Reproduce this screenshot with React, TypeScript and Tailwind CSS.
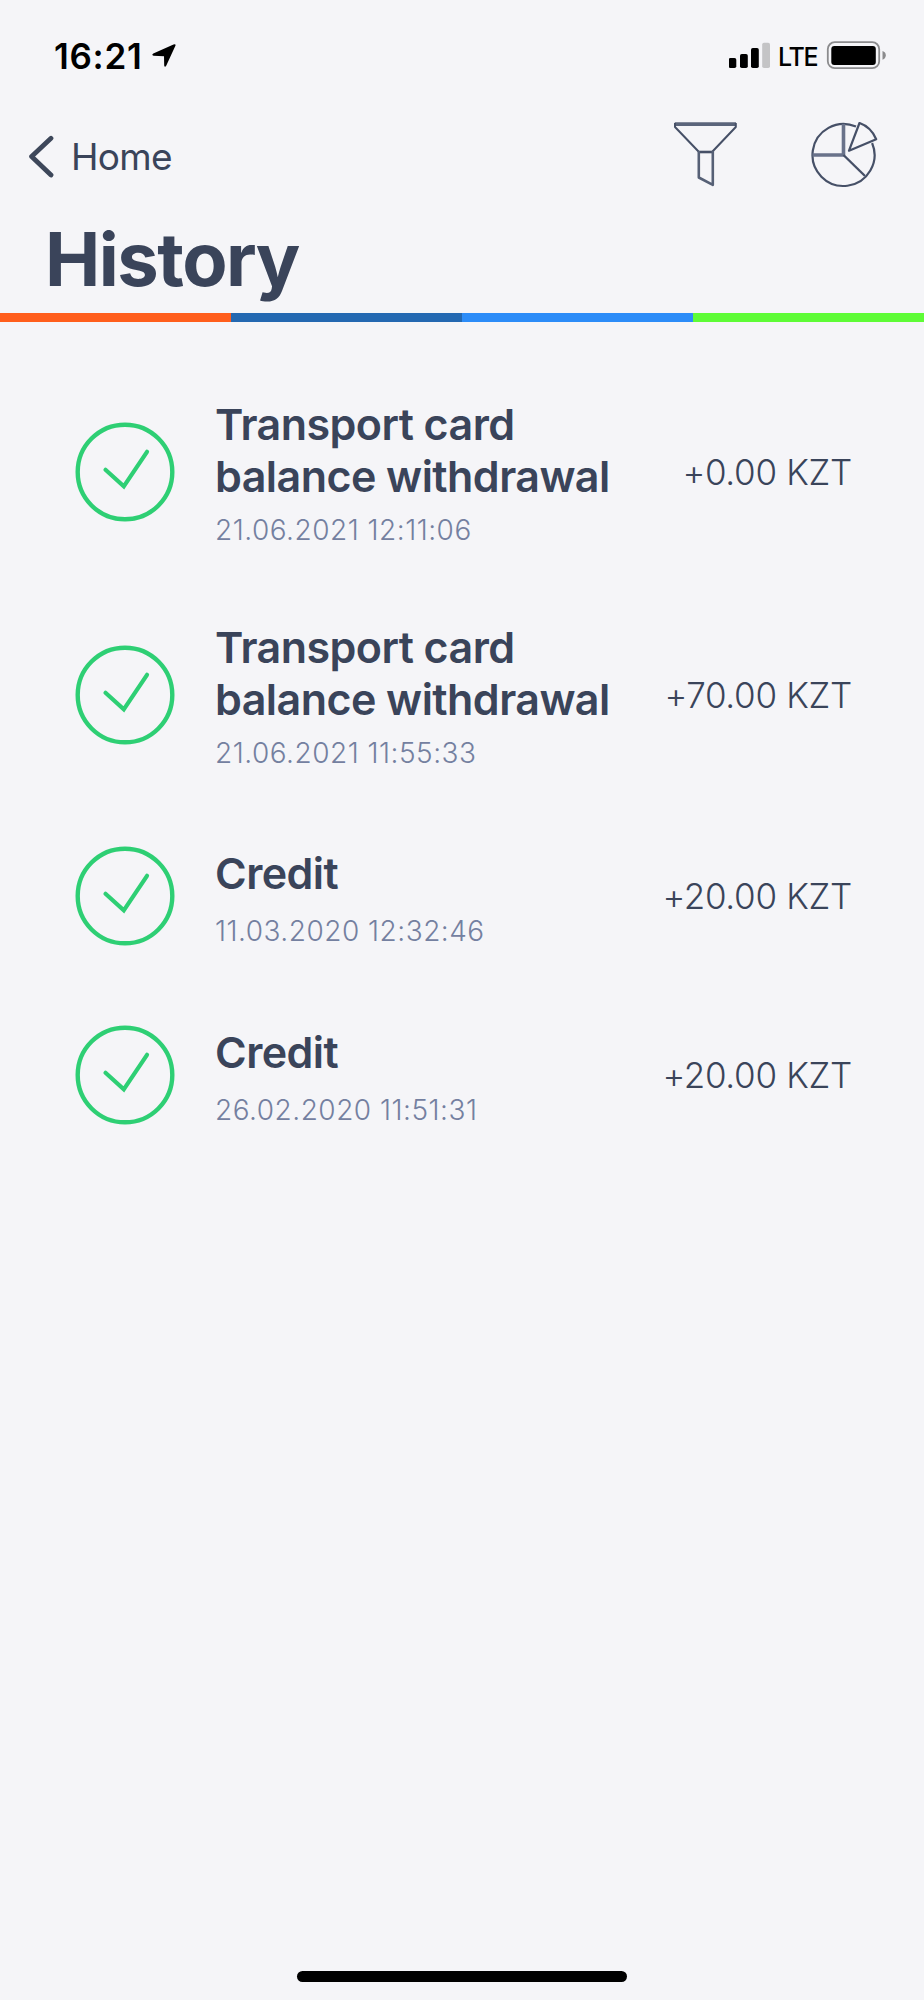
type Entry = { title: string[]; date: string; amount: string };

const entries: Entry[] = [
  { title: ["Transport card", "balance withdrawal"], date: "21.06.2021 12:11:06", amount: "+0.00 KZT" },
  { title: ["Transport card", "balance withdrawal"], date: "21.06.2021 11:55:33", amount: "+70.00 KZT" },
  { title: ["Credit"], date: "11.03.2020 12:32:46", amount: "+20.00 KZT" },
  { title: ["Credit"], date: "26.02.2020 11:51:31", amount: "+20.00 KZT" },
];

function StatusBar() {
  return (
    <div className="flex h-[112px] items-start justify-between pl-[54px] pr-[38px] pt-[35px] text-black">
      <div className="flex items-start">
        <span className="w-[98px] whitespace-nowrap text-[35px] font-semibold leading-[42px] tracking-[0.7px]">16:21</span>
        <svg className="mt-[9px]" width="24" height="24" viewBox="0 0 24 24">
          <path d="M23.400 1.800 L14.200 21.800 Q12.800 24 12.200 21.500 L12 12.300 L1.500 11.800 Q-.8 10.900 1.300 9.500 L21.500 .5 Q24.200 -.2 23.400 1.800Z" fill="currentColor" />
        </svg>
      </div>
      <div className="flex items-start">
        <svg className="mt-[7px]" width="42" height="28" viewBox="0 0 42 28">
          <rect x="-0.500" y="16" width="7.800" height="10" rx="1.800" />
          <rect x="11" y="12" width="7.800" height="14" rx="1.800" />
          <rect x="22" y="6" width="7.800" height="20" rx="1.800" />
          <rect x="33.200" y="0.700" width="7.800" height="25.300" rx="1.800" fill="#c4c4c6" />
        </svg>
        <span className="ml-[7px] mt-[6px] w-[48px] whitespace-nowrap text-[25px] font-medium leading-[32px] tracking-[-1.300px]">LTE</span>
        <svg className="mt-[6px]" width="60" height="29" viewBox="0 0 60 29">
          <rect x="1.800" y="1.200" width="51.400" height="26" rx="7" fill="none" stroke="#8b8b8d" strokeWidth="1.800" />
          <rect x="5.300" y="5" width="44.500" height="19" rx="3" />
          <path d="M56.500 10 Q59.800 11 59.800 14.300 Q59.800 17.500 56.500 18.700Z" fill="#8b8b8d" />
        </svg>
      </div>
    </div>
  );
}

function FilterIcon() {
  return (
    <svg width="64" height="68" viewBox="0 0 64 68" fill="none" stroke="#465067" strokeWidth="2" strokeLinejoin="round">
      <path d="M.8 2.200 H62" strokeWidth="3.800" stroke="#5b657b" />
      <path d="M1 1 V5 L24.500 29.500 M61.800 1 V5 L38.500 29.500" />
      <path d="M24.500 30 H38.500" strokeWidth="2.600" />
      <path d="M24.800 29 V55.500 L38.800 62.800 V29" strokeWidth="2.600" stroke="#566076" />
    </svg>
  );
}

function ChartIcon() {
  return (
    <svg width="68" height="68" viewBox="0 0 68 68" fill="none" stroke="#465067" strokeLinejoin="round">
      <path d="M46 4.600 A31 31 0 1 0 62.100 21" strokeWidth="2.200" />
      <path d="M33.500 2 V33 H2.500" strokeWidth="3.600" stroke="#69728a" />
      <path d="M33.500 33 L55 54" strokeWidth="2.400" />
      <path d="M39 28.700 L49.500 1 Q61 5 66.200 17.200 Z" strokeWidth="2.200" />
    </svg>
  );
}

function Header() {
  return (
    <header>
      <div className="flex h-[88px] items-start justify-between pl-[28px] pr-[46px]">
        <a className="flex items-start">
          <svg className="mt-[22px]" width="28" height="44" viewBox="0 0 28 44" fill="none" stroke="#3d475a" strokeWidth="4.800" strokeLinecap="round" strokeLinejoin="round">
            <path d="M23 4.300 L3.600 22.500 L23 41" />
          </svg>
          <span className="ml-[15px] mt-[22px] whitespace-nowrap text-[37px] font-normal leading-[46px] tracking-[-0.7px]">Home</span>
        </a>
        <div className="flex gap-[72px] pt-[10px]">
          <FilterIcon />
          <ChartIcon />
        </div>
      </div>
      <h1 className="h-[113px] pl-[45px] pt-[14px] text-[74px] font-bold leading-[90px] tracking-[-1.500px]">History</h1>
      <div className="grid h-[8.500px] grid-cols-4">
        <div className="bg-[#ff5e1c]" />
        <div className="bg-[#2368b1]" />
        <div className="bg-[#2c8cf8]" />
        <div className="bg-[#5efc36]" />
      </div>
    </header>
  );
}

function Row({ entry }: { entry: Entry }) {
  const tall = entry.title.length > 1;
  return (
    <li className={`flex items-center pl-[75px] pr-[72px] ${tall ? "h-[223.300px]" : "h-[178.500px]"}`}>
      <svg className="shrink-0" width="100" height="100" viewBox="0 0 100 100" fill="none" stroke="#2ecf74">
        <circle cx="50" cy="50" r="47.300" strokeWidth="4.400" />
        <path d="M30.500 47.800 L48.800 64.300 L72 29.800" strokeWidth="4.200" strokeLinecap="round" />
      </svg>
      <div className={`ml-[40px] flex flex-1 flex-col ${tall ? "gap-[11px]" : "gap-[15px] pt-[3px]"}`}>
        <div className="text-[43px] font-semibold leading-[52px] tracking-[-0.550px]">
          {entry.title.map((line) => (
            <div key={line} className="whitespace-nowrap">{line}</div>
          ))}
        </div>
        <div className="whitespace-nowrap text-[28px] font-light leading-[34px] tracking-[0.500px] text-[#7480a0]">{entry.date}</div>
      </div>
      <div className="whitespace-nowrap text-[35px] font-light leading-[42px] tracking-[-0.300px]">{entry.amount}</div>
    </li>
  );
}

export default function App() {
  return (
    <main className="flex h-[2000px] w-[924px] flex-col overflow-hidden bg-[#f5f5f8] font-['Inter','Liberation_Sans',sans-serif] text-[#3a445a]">
      <StatusBar />
      <Header />
      <ul className="grow pt-[39px]">
        {entries.map((entry) => (
          <Row key={entry.date} entry={entry} />
        ))}
      </ul>
      <div className="mb-[18px] ml-[297px] h-[11px] w-[330px] rounded-full bg-black" />
    </main>
  );
}
